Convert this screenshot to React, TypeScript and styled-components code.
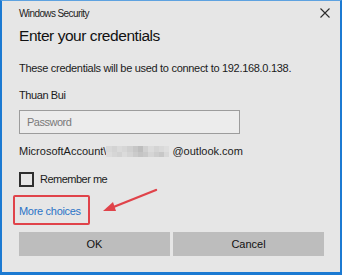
import styled, { createGlobalStyle } from "styled-components";

const GlobalStyle = createGlobalStyle`
  html, body {
    margin: 0;
    padding: 0;
    background: #e6e6e6;
  }
  * {
    box-sizing: border-box;
  }
`;

// pixelated blur over the account name
const blurShades = [
  ["#d8d8d8", "#dcdcdc"],
  ["#d3d3d3", "#d6d6d6"],
  ["#dadada", "#d2d2d2"],
  ["#d6d6d6", "#dbdbdb"],
  ["#cfcfcf", "#d4d4d4"],
  ["#c6c6c6", "#cbcbcb"],
  ["#bdbdbd", "#c4c4c4"],
  ["#d0d0d0", "#c9c9c9"],
  ["#dbdbdb", "#d5d5d5"],
  ["#d4d4d4", "#cdcdcd"],
  ["#d9d9d9", "#c7c7c7"],
  ["#dedede", "#d8d8d8"],
];

export default function App() {
  return (
    <>
      <GlobalStyle />
      <Window>
        <TitleBar>
          <span>Windows Security</span>
          <CloseButton aria-label="Close">
            <svg width="10" height="10" viewBox="0 0 10 10">
              <path d="M0.5 0.5 L9.5 9.5 M9.5 0.5 L0.5 9.5" stroke="#2b2b2b" strokeWidth="1.1" fill="none" />
            </svg>
          </CloseButton>
        </TitleBar>

        <Heading>Enter your credentials</Heading>
        <Text $top={14} $spacing={-0.3}>
          These credentials will be used to connect to 192.168.0.138.
        </Text>
        <Text $top={11} $spacing={-0.4}>
          Thuan Bui
        </Text>
        <PasswordInput type="password" placeholder="Password" />

        <AccountRow>
          <span>MicrosoftAccount\</span>
          <Blur>
            {blurShades.map((col, i) => (
              <BlurColumn key={i}>
                {col.map((shade, j) => (
                  <BlurCell key={j} $shade={shade} />
                ))}
              </BlurColumn>
            ))}
          </Blur>
          <span>@outlook.com</span>
        </AccountRow>

        <CheckRow>
          <CheckBox />
          <span>Remember me</span>
        </CheckRow>

        <Highlight>
          <Link>More choices</Link>
        </Highlight>

        <ButtonRow>
          <Button>OK</Button>
          <Button>Cancel</Button>
        </ButtonRow>

        <Arrow width="60" height="30" viewBox="0 0 60 30">
          <line x1="57" y1="2" x2="12" y2="20" stroke="#e0434a" strokeWidth="2.4" strokeLinecap="round" />
          <polygon points="4,23 14,14 17,23" fill="#e0434a" />
        </Arrow>
      </Window>
    </>
  );
}

const Window = styled.div`
  position: relative;
  width: 342px;
  height: 275px;
  background: #e6e6e6;
  border-top: 1px solid #5ea2e0;
  border-left: 2px solid #1c7ad2;
  border-right: 2px solid #1c7ad2;
  border-bottom: 3px solid #1c7ad2;
  padding: 0 17px;
  font-family: "Liberation Sans", Arial, sans-serif;
  color: #1b1b1b;
  display: flex;
  flex-direction: column;
`;

const TitleBar = styled.div`
  height: 24px;
  display: flex;
  align-items: center;
  justify-content: space-between;
  font-size: 10px;
  letter-spacing: -0.6px;
  color: #222;
  margin-right: -9px;
`;

const CloseButton = styled.div`
  width: 14px;
  height: 14px;
  display: flex;
  align-items: center;
  justify-content: center;
`;

const Heading = styled.h1`
  margin: 1px 0 0;
  font-size: 15.5px;
  letter-spacing: -0.45px;
  line-height: 20px;
  font-weight: 400;
  color: #111;
`;

const Text = styled.div<{ $top: number; $spacing: number }>`
  margin-top: ${(p) => p.$top}px;
  font-size: 11px;
  line-height: 16px;
  letter-spacing: ${(p) => p.$spacing}px;
  white-space: nowrap;
`;

const PasswordInput = styled.input`
  margin-top: 7px;
  width: 221px;
  height: 24px;
  padding: 0 7px;
  background: #ececec;
  border: 1px solid #9c9c9c;
  font-family: inherit;
  font-size: 11px;
  letter-spacing: -0.5px;
  color: #222;
  outline: none;

  &::placeholder {
    color: #7a7a7a;
  }
`;

const AccountRow = styled.div`
  margin-top: 9px;
  display: flex;
  align-items: center;
  font-size: 11px;
  line-height: 16px;
  white-space: nowrap;
`;

const Blur = styled.div`
  display: flex;
  height: 11px;
  margin: 1px 3px 0 0;
`;

const BlurColumn = styled.div`
  display: flex;
  flex-direction: column;
`;

const BlurCell = styled.div<{ $shade: string }>`
  width: 5.25px;
  height: 5.5px;
  background: ${(p) => p.$shade};
`;

const CheckRow = styled.div`
  margin-top: 12px;
  display: flex;
  align-items: center;
  gap: 6px;
  font-size: 11px;
  letter-spacing: -0.5px;
  line-height: 16px;
`;

const CheckBox = styled.div`
  width: 15px;
  height: 15px;
  border: 2px solid #2e2e2e;
  background: transparent;
`;

const Highlight = styled.div`
  margin: 8px 0 0 -6px;
  width: 77px;
  height: 30px;
  border: 2px solid #e0434a;
  border-radius: 2px;
  padding: 0 4px;
  display: flex;
  align-items: center;
`;

const Link = styled.span`
  font-size: 11px;
  letter-spacing: -0.3px;
  white-space: nowrap;
  color: #2b74c7;
  padding-top: 1px;
`;

const ButtonRow = styled.div`
  margin-top: 7px;
  display: grid;
  grid-template-columns: 1fr 1fr;
  gap: 3px;
  margin-right: -1px;
`;

const Button = styled.div`
  height: 24px;
  background: #bdbdbd;
  display: flex;
  align-items: center;
  justify-content: center;
  font-size: 11px;
  color: #111;
`;

const Arrow = styled.svg`
  position: absolute;
  left: 97px;
  top: 187px;
`;
